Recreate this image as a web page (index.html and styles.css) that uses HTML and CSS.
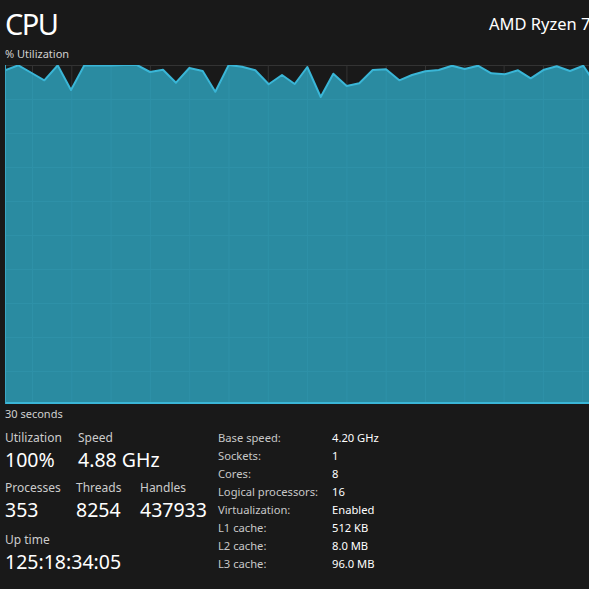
FILE: index.html
```html
<!DOCTYPE html>
<html>
<head>
<meta charset="utf-8">
<link rel="stylesheet" href="styles.css">
</head>
<body>
<div class="page">
  <header class="head">
    <div class="title">CPU</div>
    <div class="model">AMD Ryzen 7 7800X3D 8-Core Processor</div>
  </header>
  <div class="axis-top">% Utilization</div>
  <div class="graph">
    <svg width="600" height="339" viewBox="0 0 600 339">
      <rect x="0" y="0" width="600" height="339" fill="#191919"/>
      <g class="grid-dark" stroke="#333333" stroke-width="1">
        <line x1="0" y1="0.5" x2="600" y2="0.5"/>
        <line x1="27.5" y1="0" x2="27.5" y2="339"/>
        <line x1="66.8" y1="0" x2="66.8" y2="339"/>
        <line x1="106.1" y1="0" x2="106.1" y2="339"/>
        <line x1="145.4" y1="0" x2="145.4" y2="339"/>
        <line x1="184.7" y1="0" x2="184.7" y2="339"/>
        <line x1="224" y1="0" x2="224" y2="339"/>
        <line x1="263.3" y1="0" x2="263.3" y2="339"/>
        <line x1="302.6" y1="0" x2="302.6" y2="339"/>
        <line x1="341.9" y1="0" x2="341.9" y2="339"/>
        <line x1="381.2" y1="0" x2="381.2" y2="339"/>
        <line x1="420.5" y1="0" x2="420.5" y2="339"/>
        <line x1="459.8" y1="0" x2="459.8" y2="339"/>
        <line x1="499.1" y1="0" x2="499.1" y2="339"/>
        <line x1="538.4" y1="0" x2="538.4" y2="339"/>
        <line x1="577.7" y1="0" x2="577.7" y2="339"/>
      </g>
      <clipPath id="area">
        <polygon points="0,5.3 13.3,0.3 26.7,8 39.3,15.3 52.7,0.3 66,25 79.3,0.3 92.7,0.5 106,0.5 119,0 132,0 145,7 158,4.7 171,17.7 184.3,3 197.7,6 210.3,26.7 223.7,0 237,1.7 250.3,5.3 263.7,19.3 277,10 289.7,19 302.3,2 315.7,32 328.3,8.7 341.7,21 354.3,18.3 367.7,5 381,4.3 394.3,15.3 407,10 420.3,6.3 433.7,5 447,0.7 459.7,4 473,0.7 486.3,8.3 499.7,9.3 513,5.3 525.7,13.3 539,4.7 551.7,1.3 565,6 578.3,0.7 591.6,21 604,10 604,339 0,339"/>
      </clipPath>
      <g clip-path="url(#area)">
        <rect x="0" y="0" width="600" height="339" fill="#2a8ba1"/>
        <g stroke="#2e91a8" stroke-width="1">
          <line x1="27.5" y1="0" x2="27.5" y2="339"/>
          <line x1="66.8" y1="0" x2="66.8" y2="339"/>
          <line x1="106.1" y1="0" x2="106.1" y2="339"/>
          <line x1="145.4" y1="0" x2="145.4" y2="339"/>
          <line x1="184.7" y1="0" x2="184.7" y2="339"/>
          <line x1="224" y1="0" x2="224" y2="339"/>
          <line x1="263.3" y1="0" x2="263.3" y2="339"/>
          <line x1="302.6" y1="0" x2="302.6" y2="339"/>
          <line x1="341.9" y1="0" x2="341.9" y2="339"/>
          <line x1="381.2" y1="0" x2="381.2" y2="339"/>
          <line x1="420.5" y1="0" x2="420.5" y2="339"/>
          <line x1="459.8" y1="0" x2="459.8" y2="339"/>
          <line x1="499.1" y1="0" x2="499.1" y2="339"/>
          <line x1="538.4" y1="0" x2="538.4" y2="339"/>
          <line x1="577.7" y1="0" x2="577.7" y2="339"/>
          <line x1="0" y1="34.5" x2="600" y2="34.5"/>
          <line x1="0" y1="68.5" x2="600" y2="68.5"/>
          <line x1="0" y1="102.5" x2="600" y2="102.5"/>
          <line x1="0" y1="136.5" x2="600" y2="136.5"/>
          <line x1="0" y1="170.5" x2="600" y2="170.5"/>
          <line x1="0" y1="204.5" x2="600" y2="204.5"/>
          <line x1="0" y1="238.5" x2="600" y2="238.5"/>
          <line x1="0" y1="272.5" x2="600" y2="272.5"/>
          <line x1="0" y1="306.5" x2="600" y2="306.5"/>
        </g>
      </g>
      <polyline fill="none" stroke="#3ab6d7" stroke-width="2" stroke-linejoin="round" points="0,5.3 13.3,0.3 26.7,8 39.3,15.3 52.7,0.3 66,25 79.3,0.3 92.7,0.5 106,0.5 119,0 132,0 145,7 158,4.7 171,17.7 184.3,3 197.7,6 210.3,26.7 223.7,0 237,1.7 250.3,5.3 263.7,19.3 277,10 289.7,19 302.3,2 315.7,32 328.3,8.7 341.7,21 354.3,18.3 367.7,5 381,4.3 394.3,15.3 407,10 420.3,6.3 433.7,5 447,0.7 459.7,4 473,0.7 486.3,8.3 499.7,9.3 513,5.3 525.7,13.3 539,4.7 551.7,1.3 565,6 578.3,0.7 591.6,21 604,10"/>
      <line x1="0" y1="338" x2="600" y2="338" stroke="#3ab6d7" stroke-width="2"/>
      <line x1="0.5" y1="0" x2="0.5" y2="339" stroke="#3aa6c4" stroke-width="1"/>
    </svg>
  </div>
  <div class="axis-bottom">30 seconds</div>
  <section class="stats">
    <div class="left">
      <div class="row">
        <div class="stat w73"><div class="label">Utilization</div><div class="value">100%</div></div>
        <div class="stat"><div class="label">Speed</div><div class="value">4.88 GHz</div></div>
      </div>
      <div class="row">
        <div class="stat w71"><div class="label">Processes</div><div class="value">353</div></div>
        <div class="stat w64"><div class="label">Threads</div><div class="value">8254</div></div>
        <div class="stat"><div class="label">Handles</div><div class="value">437933</div></div>
      </div>
      <div class="row row-last">
        <div class="stat"><div class="label">Up time</div><div class="value">125:18:34:05</div></div>
      </div>
    </div>
    <dl class="specs">
      <dt>Base speed:</dt><dd>4.20 GHz</dd>
      <dt>Sockets:</dt><dd>1</dd>
      <dt>Cores:</dt><dd>8</dd>
      <dt>Logical processors:</dt><dd>16</dd>
      <dt>Virtualization:</dt><dd>Enabled</dd>
      <dt>L1 cache:</dt><dd>512 KB</dd>
      <dt>L2 cache:</dt><dd>8.0 MB</dd>
      <dt>L3 cache:</dt><dd>96.0 MB</dd>
    </dl>
  </section>
</div>
</body>
</html>
```

FILE: styles.css
```css
html, body {
  margin: 0;
  padding: 0;
  background: #191919;
  overflow: hidden;
}
body {
  width: 589px;
  height: 589px;
  font-family: "Noto Sans", "Open Sans", sans-serif;
  color: #ffffff;
}
.page {
  width: 800px;
  padding-left: 5px;
}
.head {
  display: flex;
  align-items: flex-end;
  height: 44px;
}
.title {
  flex: 0 0 484px;
  font-size: 29px;
  line-height: 40px;
  font-weight: 400;
  letter-spacing: -1.5px;
}
.model {
  font-size: 16.5px;
  line-height: 30px;
  white-space: nowrap;
  margin-bottom: 5px;
}
.axis-top, .axis-bottom {
  font-size: 11px;
  color: #d0d0d0;
  line-height: 16px;
  height: 19px;
}
.axis-top { height: 19px; margin-top: 2px; }
.graph {
  height: 339px;
  overflow: hidden;
}
.graph svg { display: block; }
.axis-bottom { margin-top: 2px; }
.stats {
  display: flex;
  margin-top: 4px;
}
.left {
  flex: 0 0 213px;
  display: flex;
  flex-direction: column;
  gap: 6px;
}
.row { display: flex; }
.row-last { margin-top: 2px; }
.w73 { flex: 0 0 73px; }
.w71 { flex: 0 0 71px; }
.w64 { flex: 0 0 64px; }
.label {
  font-size: 12px;
  line-height: 17px;
  color: #cccccc;
}
.value {
  font-size: 19.5px;
  line-height: 27px;
  color: #ffffff;
}
.specs {
  margin: 0;
  display: grid;
  grid-template-columns: 114px auto;
  grid-auto-rows: 18px;
  font-size: 11.2px;
  line-height: 18px;
}
.specs dt { color: #c8c8c8; margin: 0; }
.specs dd { color: #ffffff; margin: 0; }
```
